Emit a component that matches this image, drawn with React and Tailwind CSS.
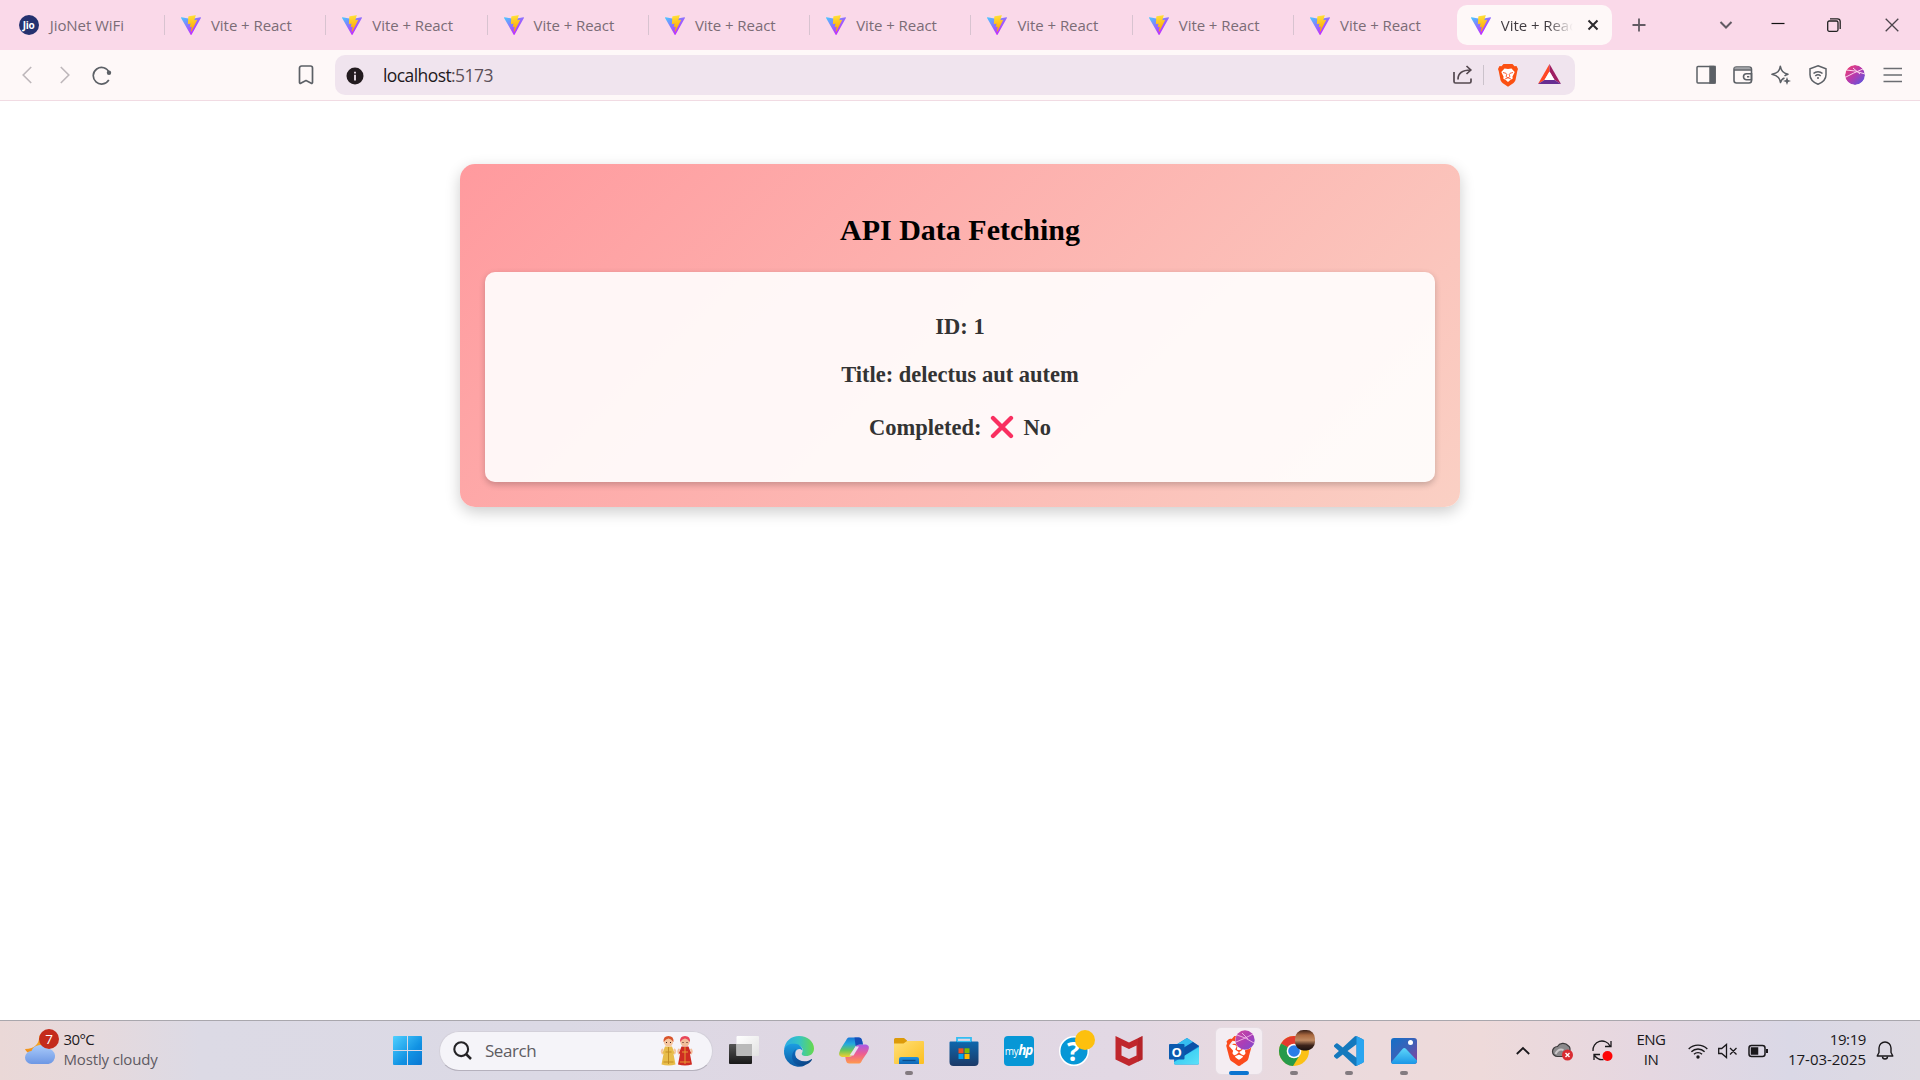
import React from "react";
import { SiBrave } from "react-icons/si";

const UI = "font-['Open_Sans','Noto_Sans',sans-serif]";

function ViteLogo({ id }) {
  return (
    <svg width="20" height="20" viewBox="2 2 28 28" className="shrink-0">
      <defs>
        <linearGradient id={id + "a"} x1="6" y1="33" x2="235" y2="344" gradientUnits="userSpaceOnUse" gradientTransform="translate(1.34 1.894) scale(.07142857)">
          <stop offset="0" stopColor="#41d1ff" />
          <stop offset="1" stopColor="#bd34fe" />
        </linearGradient>
        <linearGradient id={id + "b"} x1="194.651" y1="8.818" x2="236.076" y2="292.989" gradientUnits="userSpaceOnUse" gradientTransform="translate(1.34 1.894) scale(.07142857)">
          <stop offset="0" stopColor="#ffea83" />
          <stop offset=".083" stopColor="#ffdd35" />
          <stop offset="1" stopColor="#ffa800" />
        </linearGradient>
      </defs>
      <path fill={`url(#${id}a)`} d="M29.884 6.146l-13.142 23.5a.714.714 0 0 1-1.244.005L2.096 6.148a.714.714 0 0 1 .746-1.057l13.156 2.352a.714.714 0 0 0 .253 0l12.881-2.348a.714.714 0 0 1 .752 1.05z" />
      <path fill={`url(#${id}b)`} d="M22.264 2.007l-9.726 1.906a.357.357 0 0 0-.288.33l-.598 10.104a.357.357 0 0 0 .437.369l2.707-.625a.357.357 0 0 1 .43.42l-.804 3.939a.357.357 0 0 0 .454.413l1.672-.508a.357.357 0 0 1 .454.414l-1.279 6.187c-.08.387.435.598.65.267l.143-.222 7.925-15.815a.357.357 0 0 0-.387-.51l-2.787.537a.357.357 0 0 1-.41-.45l1.818-6.306a.357.357 0 0 0-.412-.45z" />
    </svg>
  );
}

function Tab({ icon, children, last }) {
  return (
    <div className="flex h-5 w-[161.3px] shrink-0 items-center pl-4">
      {icon}
      <span className="ml-2.5 flex-1 whitespace-nowrap text-[15px] leading-5 tracking-[-0.06px] text-[#7a6c76]">{children}</span>
      {!last && <span className="h-5 w-px bg-[#d8c3d0]" />}
    </div>
  );
}

function TabStrip() {
  return (
    <div className="flex h-[50px] items-center bg-[#fad9e9] pl-[3.700px]">
      <Tab icon={
        <span className="-ml-px mr-px flex size-5 shrink-0 items-center justify-center rounded-full bg-[#24316f] text-[10px] font-bold leading-none tracking-[-0.3px] text-white">Jio</span>
      }>JioNet WiFi</Tab>
      {[1, 2, 3, 4, 5, 6, 7, 8].map((n) => (
        <Tab key={n} icon={<ViteLogo id={"v" + n} />} last={n === 8}>Vite + React</Tab>
      ))}
      <div className="ml-[1.500px] flex h-10 w-[155px] shrink-0 items-center rounded-[10px] bg-[#fef8f8] pl-3.5">
        <ViteLogo id="v9" />
        <span className="ml-2.5 w-[72px] overflow-hidden whitespace-nowrap bg-linear-to-r from-[#3f3a3f] from-65% to-[#3f3a3f00] bg-clip-text text-[15px] leading-5 tracking-[-0.06px] text-transparent">Vite + React</span>
        <svg width="12" height="12" viewBox="0 0 12 12" className="ml-[14px]" stroke="#2c2a2d" strokeWidth="2"><path d="M1.500 1.500l9 9M10.500 1.500l-9 9" /></svg>
      </div>
      <svg width="14" height="14" viewBox="0 0 14 14" className="ml-5" stroke="#625a63" strokeWidth="1.800"><path d="M7 .5v13M.5 7h13" /></svg>
      <div className="ml-auto flex items-center pr-[21.500px]">
        <svg width="14" height="10" viewBox="0 0 14 10" fill="none" stroke="#625a63" strokeWidth="2"><path d="M1.500 2l5.500 5.500L12.500 2" /></svg>
        <svg width="14" height="14" viewBox="0 0 14 14" className="ml-[38px]" stroke="#111" strokeWidth="1.200"><path d="M.5 5.500h13" /></svg>
        <svg width="14" height="14" viewBox="0 0 14 14" className="ml-[42px]" fill="none" stroke="#222" strokeWidth="1.300"><rect x=".7" y="3" width="10.300" height="10.300" rx="1.500" /><path d="M3 .8h7.500a2.700 2.700 0 0 1 2.700 2.700V11" /></svg>
        <svg width="14" height="14" viewBox="0 0 14 14" className="ml-[44px]" stroke="#4b434a" strokeWidth="1.300"><path d="M.7.700l12.600 12.600M13.300.700L.700 13.300" /></svg>
      </div>
    </div>
  );
}

function Toolbar() {
  return (
    <div className="flex h-[51px] items-center border-b border-[#f1dbe3] bg-[#fef8f8]">
      <svg width="10" height="18" viewBox="0 0 10 18" className="ml-[22px]" fill="none" stroke="#bdb7ba" strokeWidth="1.600"><path d="M9.200 1L1.200 9l8 8" /></svg>
      <svg width="10" height="18" viewBox="0 0 10 18" className="ml-[28px]" fill="none" stroke="#bdb7ba" strokeWidth="1.600"><path d="M.8 1l8 8-8 8" /></svg>
      <svg width="20" height="20" viewBox="0 0 20 20" className="ml-[22px]" fill="none" stroke="#5c6066" strokeWidth="1.700"><path d="M17.200 7.500A8.300 8.300 0 1 0 16.800 14.800" /><circle cx="17" cy="7.700" r="2.200" fill="#5c6066" stroke="none" /></svg>
      <svg width="16" height="20" viewBox="0 0 16 20" className="ml-[186px] mr-px" fill="none" stroke="#5c6066" strokeWidth="1.700" strokeLinejoin="round"><path d="M1.500 3a2 2 0 0 1 2-2h9a2 2 0 0 1 2 2v14.500a.8.8 0 0 1-1.200.7L8 15.500l-5.300 2.700a.8.8 0 0 1-1.200-.7z" /></svg>
      <div className="ml-5 flex h-10 w-[1240px] items-center rounded-[10px] bg-[#f0e4ee]">
        <svg width="18" height="18" viewBox="0 0 18 18" className="mt-0.5 ml-[11px]"><circle cx="9" cy="9" r="8.500" fill="#231b1f" /><path d="M9 4.700v1.700M9 7.800v5.700" stroke="#f0e4ee" strokeWidth="1.800" /></svg>
        <span className="ml-[19px] text-[17.500px] leading-6 tracking-[-0.58px] text-[#1f181c]">localhost<span className="text-[#5c5059]">:5173</span></span>
        <div className="ml-auto flex items-center pr-3.5">
          <svg width="20" height="20" viewBox="0 0 20 20" fill="none" stroke="#54484f" strokeWidth="1.700"><path d="M1 7v9.500A1.500 1.500 0 0 0 2.500 18h14a1.500 1.500 0 0 0 1.500-1.500V13.500" /><path d="M5 14.500C5 8.500 9 5 17.500 5M13.500 1l4.300 4-4.300 4" /></svg>
          <span className="ml-[10px] h-5 w-px bg-[#cbc2cb]" />
          <span className="ml-3.5 flex h-6 w-5 items-center justify-center">
            <svg width="20" height="23" viewBox="0 0 20 23"><path d="M5.500 0h9l2 2.300 2-.2 1.500 3-.7 2-1.800 9c-.3 1.300-1 2-2 2.800L10 22.800l-5.500-3.900c-1-.8-1.700-1.500-2-2.800l-1.800-9-.7-2 1.500-3 2 .2z" fill="#fb5012" /><path d="M6.500 4.500L10 5l3.500-.5L16.700 8l-2.300 4.700.4 1.700-2.800 1.900-2 1.700-2-1.700-2.800-1.900.4-1.700L3.300 8z" fill="#fff" /><path d="M5 8.500l3 .8.8 1.400M15 8.500l-3 .8-.8 1.400M8.800 10.500l-.8 2 2 1.300 2-1.300-.8-2M7 15l3-1.200 3 1.200" fill="none" stroke="#fb542b" strokeWidth=".9" /></svg>
          </span>
          <svg width="23" height="20" viewBox="0 0 23 20" className="mb-0.5 ml-5"><path d="M11.500 0L0 20l6.500-4 5-8.500z" fill="#ff4724" /><path d="M11.500 0L23 20l-6.500-4-5-8.500z" fill="#9e1f63" /><path d="M0 20h23l-6.500-4h-10z" fill="#662d91" /><path d="M11.500 7.500l5 8.500h-10z" fill="#fff" /></svg>
        </div>
      </div>
      <div className="ml-auto flex items-center gap-[17.300px] pr-[17.500px]">
        <svg width="20" height="20" viewBox="0 0 20 20" fill="none" stroke="#5c6066" strokeWidth="1.500"><rect x="1" y="1.500" width="18" height="16.500" rx="1" /><path d="M14 1.500h5V18h-5z" fill="#5c6066" /></svg>
        <svg width="20" height="20" viewBox="0 0 20 20" fill="none" stroke="#5c6066" strokeWidth="1.600"><rect x="1" y="2" width="17.500" height="16" rx="2.500" /><path d="M1.500 3.500H17" stroke="#a3a4a8" strokeWidth="2.200" /><path d="M1 5h17.500M18.500 8.700H13.500a3 3 0 0 0 0 6h5zM14 11.700h2.300" /></svg>
        <svg width="20" height="20" viewBox="0 0 20 20" fill="none" stroke="#5c6066" strokeWidth="1.500" strokeLinejoin="round"><path d="M13.500 13C11 14 10.200 14.500 9.500 17.500 8.700 13.500 7.500 11 1 9.300 6.500 8 8.500 6.500 9.300 1.200 10.300 6 12 8 17 9.300c-1.800.6-2.500.9-3.500 1.700" /><path d="M16 12l1.100 2.900 2.900 1.100-2.900 1.100L16 20l-1.100-2.900L12 16l2.900-1.100z" fill="#5c6066" stroke="none" /></svg>
        <svg width="20" height="20" viewBox="0 0 20 20" fill="none" stroke="#5c6066" strokeWidth="1.500"><path d="M10 .8l8 3v6c0 4.700-3 7.500-8 9.500-5-2-8-4.800-8-9.500v-6z" /><path d="M5.500 8.500a6.500 6.500 0 0 1 9 0M7.300 11a4 4 0 0 1 5.400 0" /><circle cx="10" cy="13" r="1" fill="#5c6066" stroke="none" /></svg>
        <svg width="20" height="20" viewBox="0 0 20 20"><defs><linearGradient id="prof" x1="0" y1="0" x2="1" y2="1"><stop offset="0" stopColor="#f8406a" /><stop offset=".5" stopColor="#b63aae" /><stop offset="1" stopColor="#4a5be8" /></linearGradient><clipPath id="pc"><circle cx="10" cy="10" r="10" /></clipPath></defs><g clipPath="url(#pc)"><circle cx="10" cy="10" r="10" fill="url(#prof)" /><path d="M-1 13Q8 8 19 3.500M1 5Q10 5 20 9M8 3l7 6" stroke="#fbd6ee" fill="none" strokeWidth="1" /></g></svg>
        <svg width="20" height="20" viewBox="0 0 20 20" stroke="#6b6d72" strokeWidth="1.600"><path d="M.5 3.500h18.500M.5 10h18.500M.5 16.500h18.500" /></svg>
      </div>
    </div>
  );
}

function DataCard() {
  return (
    <main className="flex flex-1 flex-col items-center bg-white pt-[63px] font-['Liberation_Serif',serif] font-bold">
      <div className="h-[343px] w-[1000px] rounded-[15px] bg-linear-[135deg,#ff9a9e,#fad0c4] px-[25px] pt-[49px] text-center shadow-[0_5px_15px_rgba(0,0,0,0.2)]">
        <h2 className="text-[30px] leading-[34px] text-black">API Data Fetching</h2>
        <div className="mt-[25px] h-[210px] rounded-[10px] bg-white/90 pt-[42px] text-[22.5px] leading-[26px] text-[#333] shadow-[0_2.5px_6.25px_rgba(0,0,0,0.2)]">
          <p>ID: 1</p>
          <p className="mt-[22px]">Title: delectus aut autem</p>
          <p className="mt-[27px] flex items-center justify-center gap-[5.6px]">
            <span>Completed:</span>
            <span className="mb-0.5 flex w-[31px] justify-center">
              <svg width="24" height="24" viewBox="0 0 24 24" stroke="#f92f60" strokeWidth="4.300" strokeLinecap="round"><path d="M3 3l18 18M21 3L3 21" /></svg>
            </span>
            <span>No</span>
          </p>
        </div>
      </div>
    </main>
  );
}

function Slot({ children, dot, active }) {
  return (
    <div className="flex w-[55px] shrink-0 justify-center">
      <div className={active
        ? "relative flex size-12 items-center justify-center rounded-md border border-[#e6dce3] bg-[#f4edf2]"
        : "relative flex size-12 items-center justify-center"}>
        {children}
        {dot && <span className="absolute bottom-0 h-1 w-2 rounded-full bg-[#837b80]" />}
        {active && <span className="absolute -bottom-px h-1 w-5 rounded-full bg-[#0b74d0]" />}
      </div>
    </div>
  );
}

const G = ({ id, c, v, d }) => (
  <linearGradient id={id} x1="0" y1="0" x2={v ? "0" : "1"} y2={d === 0 ? "0" : "1"}>
    {c.map((k, i) => <stop key={i} offset={i / (c.length - 1)} stopColor={k} />)}
  </linearGradient>
);

function Svg({ w = 30, h = 30, children, className }) {
  return <svg width={w} height={h} viewBox={`0 0 ${w} ${h}`} className={className} overflow="visible">{children}</svg>;
}

function TaskIcons() {
  return (
    <>
      <Slot>
        <Svg>
          <defs><G id="tv1" v c={["#555", "#181818"]} /><G id="tv2" c={["#ffffff", "#e2e2e2"]} /></defs>
          <rect x="0" y="8" width="23" height="20" rx="1" fill="url(#tv1)" />
          <rect x="7.500" y="0" width="22.500" height="20" rx="1" fill="url(#tv2)" />
          <path d="M7.500 8H23v12H7.500z" fill="#b9b9b9" />
        </Svg>
      </Slot>
      <Slot>
        <Svg>
          <defs><G id="e1" d={0} c={["#2aa9e6", "#35c4c4", "#67d94a"]} /><G id="e2" v c={["#1b9de2", "#0c59a4"]} /><G id="e3" c={["#0d6ac0", "#0b3e7a"]} /></defs>
          <path d="M0 14C1 5 7 0 15 0c9 0 15 6 15 12.500 0 5-3.500 7.500-8 7.500-3.500 0-5-1.500-4-3 1.500-2.500 1-7-4.500-8C7 8 2 10 0 14z" fill="url(#e1)" />
          <path d="M0 14.500C1 9 6 7.500 11 7.800c5 .4 7.300 3.700 7.500 6.700-2-2.500-6-2-7 1.500-1.500 6 3 11 9.500 13.500A15 15 0 0 1 0 14.500z" fill="url(#e2)" />
          <path d="M12 12.800c-3.500 5.700.5 12.500 8.500 12.500 3.200 0 5-.9 6.800-2.100.6-.4 1 0 .7.600C25.500 27.800 21 30 16 30 7 28 5.500 18 12 12.800z" fill="url(#e3)" />
        </Svg>
      </Slot>
      <Slot>
        <Svg>
          <defs><G id="c1" v c={["#1878d8", "#25a9dd", "#6ac659", "#f2cf32"]} /><G id="c2" v c={["#a858e8", "#ee5e90", "#ff9a4c"]} /></defs>
          <path d="M7 4.500C8 2 9 1.500 11 1.500h8.500c2.500 0 3 1 3.700 3.500L23.700 8H20c-2.500 0-3.500 1.500-4.200 4l-1.800 5.500C13 20 12 21 9 21H4.500C1 21-.5 19.300.3 16.500 1.500 12 4 9.500 7 4.500z" fill="url(#c1)" />
          <path d="M23 24.500c-1 2.500-2 3-4 3h-8.500c-2.500 0-3-1-3.700-3.500L6.300 21H10c2.500 0 3.500-1.500 4.200-4L16 12.500C17 9.500 18 8.500 21 8.500h4.500c3.500 0 5 1.700 4.200 4.500C28.500 17.500 26 19.500 23 24.500z" fill="url(#c2)" />
          <path d="M15.500 1.500h4c2.500 0 3 1 3.700 3.500L24 8.500h-3c-2 0-3.500.7-4.300 2z" fill="#164eb9" />
          <path d="M16.500 10.500h3.500L14.500 19.500h-4z" fill="#e9e0ec" />
        </Svg>
      </Slot>
      <Slot dot>
        <Svg>
          <defs><G id="f1" c={["#ffdf78", "#fcbf1f"]} /><G id="f2" v c={["#1f93e0", "#0e65b5"]} /></defs>
          <path d="M0 3.500A1.500 1.500 0 0 1 1.500 2H10l3 2.500V9H0z" fill="#dc9a0a" />
          <path d="M0 7.500h9.500L13 5h16a1 1 0 0 1 1 1v21a1 1 0 0 1-1 1H1a1 1 0 0 1-1-1z" fill="url(#f1)" />
          <path d="M5 28v-5a2 2 0 0 1 2-2h16a2 2 0 0 1 2 2v5z" fill="url(#f2)" /><path d="M8.500 24.500h13" stroke="#0b4c8b" strokeWidth="1.300" />
        </Svg>
      </Slot>
      <Slot>
        <Svg>
          <defs><G id="s1" v c={["#0e67ad", "#1c3a68"]} /></defs>
          <path d="M8 7V1.800h14V7" fill="none" stroke="#33bdf2" strokeWidth="1.800" />
          <path d="M.5 6.500a1 1 0 0 1 1-1h27a1 1 0 0 1 1 1V26a4 4 0 0 1-4 4h-21a4 4 0 0 1-4-4z" fill="url(#s1)" />
          <path d="M8 5.500h14" stroke="#33bdf2" strokeWidth="1.200" />
          <path d="M9.500 12.300h5v5h-5z" fill="#f25022" /><path d="M15.500 12.300h5v5h-5z" fill="#7fba00" /><path d="M9.500 18h5v5h-5z" fill="#00a4ef" /><path d="M15.500 18h5v5h-5z" fill="#ffb900" />
        </Svg>
      </Slot>
      <Slot>
        <span className="flex size-[30px] items-baseline justify-center rounded-sm bg-[#0797d6] text-[10px] leading-[28px] tracking-[-0.4px] text-white">my<b className="text-[13.500px] italic tracking-[-1px]">hp</b></span>
      </Slot>
      <Slot>
        <Svg>
          <circle cx="15" cy="15" r="14.300" fill="#0797d6" stroke="#fff" strokeWidth="1.500" />
          <text x="14.500" y="24.500" textAnchor="middle" fontSize="27" fontWeight="700" fill="#fff">?</text>
          <circle cx="26" cy="4" r="10" fill="#fdc00e" />
        </Svg>
      </Slot>
      <Slot>
        <Svg>
          <path d="M1.500 0L15 6.500 28.500 0v23.500L15 30 1.500 23.500z" fill="#c0272d" />
          <path d="M7.500 9.500L15 13l7.500-3.500v10L15 23l-7.500-3.500z" fill="#e3d8e4" />
          <path d="M24 2.200L28.500 0v23.500L24 25.700z" fill="#a92026" opacity=".5" />
        </Svg>
      </Slot>
      <Slot>
        <Svg>
          <defs><G id="o1" c={["#27c4f0", "#5de0f8"]} /></defs>
          <path d="M5 10L18 2l12 8v17a1.500 1.500 0 0 1-1.500 1.500h-22A1.500 1.500 0 0 1 5 27z" fill="#1487d4" />
          <path d="M6 9.500L18 2l6 4-13 8z" fill="#35bdf0" /><path d="M11 14l13-8 6 4-15 10z" fill="#0b51a8" />
          <path d="M30 11L5 26v1a1.500 1.500 0 0 0 1.500 1.500h22A1.500 1.500 0 0 0 30 27z" fill="url(#o1)" />
          <rect x="0" y="8" width="15.500" height="15.500" rx="1" fill="#0a5aaf" />
          <text x="7.700" y="20.500" textAnchor="middle" fontSize="13" fontWeight="700" fill="#fff">O</text>
        </Svg>
      </Slot>
      <Slot active>
        <span className="relative flex size-[30px] items-center justify-center">
          <span className="absolute h-[22px] w-4 rounded-full bg-white" />
          <SiBrave className="relative size-[30px] text-[#fb4a1c]" />
          <Svg w={20} h={20} className="absolute -top-[6px] left-[11.500px]"><circle cx="10" cy="10" r="10" fill="#f4edf2" /><circle cx="10" cy="10" r="9.700" fill="url(#tp)" /><defs><G id="tp" c={["#d04a9c", "#ad3db5", "#7c4bd0"]} /></defs><path d="M1 12Q9 9 18 4M2 5Q10 7 19 13M7 3l6 6" stroke="#f0b9e6" strokeWidth=".9" fill="none" /></Svg>
        </span>
      </Slot>
      <Slot dot>
        <Svg>
          <defs><G id="av" v c={["#3a2018", "#a9683f", "#c08a62", "#3d241b", "#1c1210"]} /></defs>
          <circle cx="15" cy="15" r="15" fill="#fbc116" />
          <path d="M15 15L2 7.500A15 15 0 0 1 28 7.500z" fill="#e33b2e" />
          <path d="M2 7.500A15 15 0 0 0 14 30l7.500-12z" fill="#269a4a" />
          <circle cx="15" cy="15" r="7.300" fill="#fff" /><circle cx="15" cy="15" r="5.800" fill="#2a7de8" />
          <rect x="16" y="-6" width="20" height="20.500" rx="8.500" fill="url(#av)" />
        </Svg>
      </Slot>
      <Slot dot>
        <svg width="30" height="30" viewBox="0 0 100 100">
          <path fill="#1479bd" d="M96.460 10.800 75.860.880a6.230 6.230 0 0 0-7.100 1.200L29.350 38.040 12.180 25.010a4.160 4.160 0 0 0-5.320.240l-5.500 5.010a4.170 4.170 0 0 0 0 6.160L16.250 50 1.360 63.580a4.170 4.170 0 0 0 0 6.160l5.500 5.010a4.160 4.160 0 0 0 5.320.240l17.170-13.030 39.410 35.960a6.220 6.220 0 0 0 7.100 1.200l20.600-9.910A6.250 6.250 0 0 0 100 83.580V16.420a6.250 6.250 0 0 0-3.540-5.630zM75.010 72.700 45.110 50l29.900-22.700z" />
          <path fill="#2aa5f0" d="M75 1l21.500 9.800a6.200 6.200 0 0 1 3.500 5.600v67.200a6.200 6.200 0 0 1-3.500 5.600L75 99z" />
        </svg>
      </Slot>
      <Slot dot>
        <Svg w={26} h={26}>
          <defs><G id="p1" c={["#1270c8", "#3c61b8", "#8d3f9b"]} /><G id="p2" v c={["#5dd6fa", "#1b96e6"]} /></defs>
          <rect width="26" height="26" rx="3" fill="url(#p1)" />
          <path d="M0 24.500L11.500 11a2.500 2.500 0 0 1 3.600 0L26 22.500v.5a3 3 0 0 1-3 3H3a3 3 0 0 1-3-1.500z" fill="url(#p2)" />
          <circle cx="19.500" cy="4.500" r="2.500" fill="#fff" />
        </Svg>
      </Slot>
    </>
  );
}

function Child({ x, skin, dress, head, trim }) {
  return (
    <g transform={`translate(${x} 0)`}>
      <path d="M2 14q-2.500 2 0 5M13 14q2.500 2 0 5" stroke={skin} strokeWidth="2" fill="none" />
      <path d="M4 11.500h7l2.500 6.500-1 1 2 10.500q-7 2-14 0L2.500 19l-1-1z" fill={dress} />
      <path d="M7.500 12v17M4.500 17h6M2.500 27h10" stroke={trim} strokeWidth="1" />
      <circle cx="7.500" cy="7" r="4.600" fill={skin} />
      <path d="M2.500 7Q2 1 7.500 1T12.500 7Q10 3.500 7.500 3.500T2.500 7z" fill={head} />
      <path d="M5.500 7v1M9.500 7v1" stroke="#3a1b16" strokeWidth="1" />
    </g>
  );
}

function Taskbar() {
  return (
    <footer className="flex h-[60px] items-center border-t border-[#a9a7ad] bg-[linear-gradient(90deg,#ead8d7_0px,#e6d9dc_90px,#dcdae5_200px,#dbd9e5_560px,#dfd7e3_800px,#e2d8e4_1120px,#ebdadd_1330px,#eedada_1480px,#e5d7e1_1650px,#dad8e6_1790px,#dedae2_1920px)]">
      <div className="flex w-[380px] shrink-0 items-center pl-[24.500px]">
        <Svg w={34} h={38} className="-mt-[7px]">
          <defs><G id="cl" v c={["#aacbfa", "#6d97e4"]} /><G id="mn" v c={["#f9b52a", "#ee8a18"]} /></defs>
          <path d="M14 7c1 8-4 14-14 14 2 5 9 7 13 4 5-4 5-13 1-18z" fill="url(#mn)" />
          <path d="M6.500 36a6.500 6.500 0 0 1 0-13A9 9 0 0 1 22 20.500a7.800 7.800 0 0 1 1.500 15.500z" fill="url(#cl)" />
          <circle cx="24" cy="11" r="10" fill="#c42b1c" />
          <text x="24" y="15.800" textAnchor="middle" fontSize="13.500" fill="#fff">7</text>
        </Svg>
        <div className="-mt-1 ml-[5px] text-[15px] leading-5">
          <p className="tracking-[-0.6px] text-[#1d1b1e]">30°C</p>
          <p className="tracking-[-0.15px] text-[#5e5a62]">Mostly cloudy</p>
        </div>
      </div>
      <Slot>
        <Svg w={29} h={29}>
          <defs><linearGradient id="win" gradientUnits="userSpaceOnUse" x1="0" y1="0" x2="29" y2="29"><stop offset="0" stopColor="#4fd0ff" /><stop offset=".6" stopColor="#1192e3" /><stop offset="1" stopColor="#0a76d2" /></linearGradient></defs>
          <path d="M1 0h13v14H0V1a1 1 0 0 1 1-1zM15 0h13a1 1 0 0 1 1 1v13H15zM0 15h14v14H1a1 1 0 0 1-1-1zM15 15h14v13a1 1 0 0 1-1 1H15z" fill="url(#win)" />
        </Svg>
      </Slot>
      <div className="ml-1 mr-[3px] flex h-[40px] w-[274px] shrink-0 items-center rounded-full border border-[#d3d0da] border-b-[#b5b1bd] bg-[#f5f4f9] pl-[13px]">
        <svg width="19" height="19" viewBox="0 0 19 19" fill="none" stroke="#242326" strokeWidth="2.100"><circle cx="8.200" cy="8.200" r="6.900" /><path d="M13 13l5 5" strokeWidth="2.500" /></svg>
        <span className="ml-[13px] text-[17px] leading-6 tracking-[-0.45px] text-[#5e5c62]">Search</span>
        <Svg w={34} h={31} className="mb-px ml-auto mr-[17px]">
          <Child x={0} skin="#f5c6a0" dress="#e8bd4a" head="#d8542b" trim="#c28d23" />
          <Child x={16.500} skin="#f2bd9a" dress="#cf2b22" head="#e8475a" trim="#e69a35" />
        </Svg>
      </div>
      <TaskIcons />
      <div className="ml-auto flex items-center pr-[26px] text-[#1a181b]">
        <svg width="14" height="10" viewBox="0 0 14 10" fill="none" stroke="currentColor" strokeWidth="1.800"><path d="M.8 8L7 2l6.200 6" /></svg>
        <Svg w={22} h={20} className="ml-[22px]">
          <path d="M5.500 15.500a5 5 0 0 1 0-10C7.500 2 13 1 16.500 5c3 2 1 10.500-3 10.500z" fill="#8b898b" stroke="#3b393b" strokeWidth="1.200" />
          <path d="M3.500 13q3-6 8-4" stroke="#ccc8ca" strokeWidth="2" fill="none" />
          <circle cx="15.500" cy="14" r="5.500" fill="#d92c32" /><path d="M13.500 12l4 4M17.500 12l-4 4" stroke="#fff" strokeWidth="1.400" />
        </Svg>
        <Svg w={21} h={21} className="ml-[18px]">
          <path d="M1 11A9 9 0 0 1 18 6M19 1v5.500h-6M2 20v-5.500h6M2.500 15.500q4 5 9 4" stroke="currentColor" strokeWidth="1.300" fill="none" />
          <circle cx="15.500" cy="16" r="5" fill="#fd0505" />
        </Svg>
        <div className="-mt-1 ml-[22px] w-[32px] text-center text-[15px] leading-5 tracking-[-0.5px]"><p>ENG</p><p>IN</p></div>
        <svg width="20" height="16" viewBox="0 0 20 16" className="ml-[21px]" fill="none" stroke="currentColor" strokeWidth="1.400"><path d="M.7 6a13 13 0 0 1 18.600 0M3.400 8.700a9.300 9.300 0 0 1 13.200 0M6 11.300a5.600 5.600 0 0 1 8 0" /><circle cx="10" cy="14" r="1.700" fill="currentColor" stroke="none" /></svg>
        <svg width="20" height="16" viewBox="0 0 20 16" className="ml-[10px]" fill="none" stroke="currentColor" strokeWidth="1.300"><path d="M.7 5.500h3L8.500 1.500v13l-4.800-4h-3zM12 5l6.500 6.500M18.500 5L12 11.500" /></svg>
        <svg width="21" height="16" viewBox="0 0 21 16" className="ml-[10px]" fill="none" stroke="currentColor" strokeWidth="1.500"><rect x="1" y="2.500" width="16" height="11" rx="2.500" /><path d="M3.500 5h6v6h-6z" fill="currentColor" /><path d="M19 6v4" strokeWidth="2" /></svg>
        <div className="-mt-1 ml-[19px] w-[78px] whitespace-nowrap text-right text-[15px] leading-5"><p className="tracking-[-0.4px]">19:19</p><p className="tracking-[-0.03px]">17-03-2025</p></div>
        <svg width="18" height="20" viewBox="0 0 18 20" className="ml-2.5" fill="none" stroke="currentColor" strokeWidth="1.400" strokeLinejoin="round"><path d="M9 1a6 6 0 0 0-6 6v4.500L1.200 15h15.600L15 11.500V7a6 6 0 0 0-6-6z" /><path d="M6.500 15.500a2.500 2.500 0 0 0 5 0" /></svg>
      </div>
    </footer>
  );
}

export default function App() {
  return (
    <div className={`flex h-[1080px] w-[1920px] flex-col overflow-hidden bg-white ${UI}`}>
      <TabStrip />
      <Toolbar />
      <DataCard />
      <Taskbar />
    </div>
  );
}
